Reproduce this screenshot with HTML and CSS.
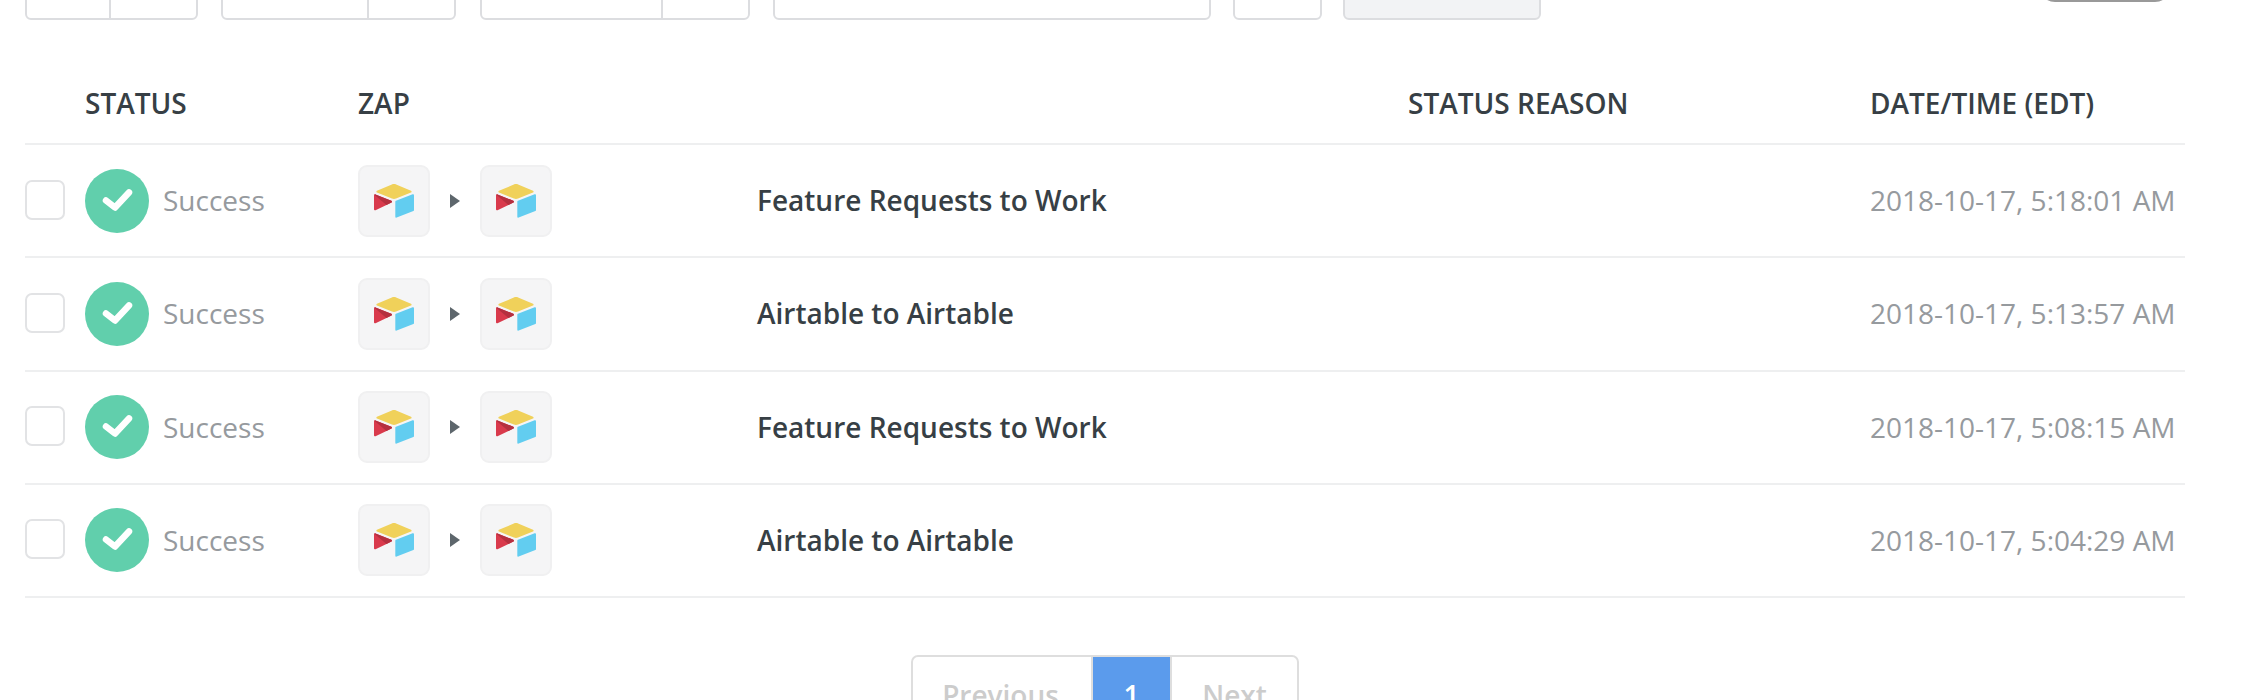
FILE: index.html
```html
<!DOCTYPE html>
<html lang="en">
<head>
<meta charset="utf-8">
<title>Zap history</title>
<link rel="stylesheet" href="styles.css">
</head>
<body>
<svg class="defs" width="0" height="0" aria-hidden="true">
  <symbol id="airtable" viewBox="11 10 177 150" preserveAspectRatio="none">
    <path fill="#f0d15a" d="M90.04 12.37 24.08 39.66c-3.67 1.52-3.63 6.73.06 8.19l66.24 26.27c5.82 2.31 12.3 2.31 18.12 0l66.24-26.27c3.69-1.46 3.73-6.67.06-8.19l-65.96-27.29c-6.02-2.49-12.78-2.49-18.8 0"/>
    <path fill="#62cdf0" d="M105.31 88.46v65.62c0 3.12 3.15 5.26 6.05 4.11l73.81-28.65c1.68-.67 2.79-2.3 2.79-4.11V59.81c0-3.12-3.15-5.26-6.05-4.11l-73.81 28.65c-1.68.67-2.79 2.3-2.79 4.11"/>
    <path fill="#d93a4c" d="m88.08 91.85-21.9 10.57-2.23 1.08-46.24 22.15c-2.93 1.42-6.67-.72-6.67-3.97V60.09c0-1.18.6-2.2 1.41-2.96.34-.34.72-.63 1.12-.85 1.1-.66 2.68-.84 4.02-.31l70.12 27.78c3.56 1.41 3.84 6.41.37 8.1"/>
    <path fill="#b5303f" d="m88.08 91.85-21.9 10.57-53.73-45.29c.34-.34.72-.63 1.12-.85 1.1-.66 2.68-.84 4.02-.31l70.12 27.78c3.56 1.41 3.84 6.41.37 8.1"/>
  </symbol>
  <symbol id="check" viewBox="0 0 64 64">
    <circle cx="32" cy="32" r="32" fill="#61cfac"/>
    <path d="M21 31.5 30 38.5 44 23.5" fill="none" stroke="#fff" stroke-width="6.5" stroke-linecap="round" stroke-linejoin="round"/>
  </symbol>
</svg>

<div class="toolbar">
  <div class="group group-a"><span class="seg seg-a1"></span><span class="seg seg-a2"></span></div>
  <div class="group group-b"><span class="seg seg-b1"></span><span class="seg seg-b2"></span></div>
  <div class="group group-c"><span class="seg seg-c1"></span><span class="seg seg-c2"></span></div>
  <div class="group group-d"></div>
  <div class="group group-e"></div>
  <div class="group group-f"></div>
  <div class="pill"></div>
</div>

<table class="history">
  <colgroup>
    <col class="col-check"><col class="col-status"><col class="col-apps"><col class="col-name"><col class="col-reason"><col class="col-date">
  </colgroup>
  <thead>
    <tr>
      <th></th><th>STATUS</th><th colspan="2">ZAP</th><th>STATUS REASON</th><th>DATE/TIME (EDT)</th>
    </tr>
  </thead>
  <tbody>
    <tr>
      <td><span class="box"></span></td>
      <td><div class="status"><svg class="status-icon"><use href="#check"/></svg><span class="status-text">Success</span></div></td>
      <td><div class="apps"><span class="tile"><svg class="logo"><use href="#airtable"/></svg></span><span class="arrow"></span><span class="tile"><svg class="logo"><use href="#airtable"/></svg></span></div></td>
      <td class="name">Feature Requests to Work</td><td></td><td class="date">2018-10-17, 5:18:01 AM</td>
    </tr>
    <tr>
      <td><span class="box"></span></td>
      <td><div class="status"><svg class="status-icon"><use href="#check"/></svg><span class="status-text">Success</span></div></td>
      <td><div class="apps"><span class="tile"><svg class="logo"><use href="#airtable"/></svg></span><span class="arrow"></span><span class="tile"><svg class="logo"><use href="#airtable"/></svg></span></div></td>
      <td class="name">Airtable to Airtable</td><td></td><td class="date">2018-10-17, 5:13:57 AM</td>
    </tr>
    <tr>
      <td><span class="box"></span></td>
      <td><div class="status"><svg class="status-icon"><use href="#check"/></svg><span class="status-text">Success</span></div></td>
      <td><div class="apps"><span class="tile"><svg class="logo"><use href="#airtable"/></svg></span><span class="arrow"></span><span class="tile"><svg class="logo"><use href="#airtable"/></svg></span></div></td>
      <td class="name">Feature Requests to Work</td><td></td><td class="date">2018-10-17, 5:08:15 AM</td>
    </tr>
    <tr>
      <td><span class="box"></span></td>
      <td><div class="status"><svg class="status-icon"><use href="#check"/></svg><span class="status-text">Success</span></div></td>
      <td><div class="apps"><span class="tile"><svg class="logo"><use href="#airtable"/></svg></span><span class="arrow"></span><span class="tile"><svg class="logo"><use href="#airtable"/></svg></span></div></td>
      <td class="name">Airtable to Airtable</td><td></td><td class="date">2018-10-17, 5:04:29 AM</td>
    </tr>
  </tbody>
</table>

<nav class="pager">
  <span class="page page-prev">Previous</span><span class="page page-current">1</span><span class="page page-next">Next</span>
</nav>
</body>
</html>
```
FILE: styles.css
```css
* { box-sizing: border-box; }
html, body { margin: 0; height: 700px; overflow: hidden; background: #fff; }
body { font-family: "Open Sans", "Noto Sans", sans-serif; color: #373f45; }
.defs { position: absolute; }

.toolbar { display: flex; align-items: flex-end; height: 20px; overflow: hidden; padding-left: 25px; }
.group { display: flex; height: 50px; border: 2px solid #dcdde0; border-radius: 6px; flex: none; }
.seg { display: block; height: 100%; }
.seg + .seg { border-left: 2px solid #dcdde0; }
.group-a { width: 173px; margin-right: 23px; }
.seg-a1 { width: 82px; }
.group-b { width: 235px; margin-right: 24px; }
.seg-b1 { width: 144px; }
.group-c { width: 270px; margin-right: 23px; }
.seg-c1 { width: 179px; }
.group-d { width: 438px; margin-right: 22px; }
.group-e { width: 89px; margin-right: 21px; }
.group-f { width: 198px; background: #f2f3f5; }
.pill { width: 132px; height: 50px; margin-left: 498px; margin-bottom: 18px; background: #999; border-radius: 16px; flex: none; }

.history { width: 2160px; margin-left: 25px; border-collapse: collapse; table-layout: fixed; }
.col-check { width: 60px; }
.col-status { width: 273px; }
.col-apps { width: 399px; }
.col-name { width: 651px; }
.col-reason { width: 462px; }
.col-date { width: 315px; }
th { height: 124px; padding: 42px 0 0; text-align: left; font-size: 28px; font-weight: 600; border-bottom: 2px solid #eeeff0; }
td { height: 113.25px; padding: 0; font-size: 28px; border-bottom: 2px solid #eeeff0; }
.box { display: block; width: 40px; height: 40px; margin-bottom: 2px; border: 2px solid #e2e3e5; border-radius: 7px; }
.status { display: flex; align-items: center; gap: 14px; color: #969a9e; }
.status-icon { width: 64px; height: 64px; flex: none; }
.status-text { margin-bottom: 1px; }
.apps { display: flex; align-items: center; }
.tile { display: flex; align-items: center; justify-content: center; width: 72px; height: 72px; background: #f5f5f6; border: 2px solid #f0f0f1; border-radius: 9px; }
.logo { width: 40px; height: 34px; }
.arrow { width: 0; height: 0; margin: 0 20px; border-left: 10px solid #5d666c; border-top: 7px solid transparent; border-bottom: 7px solid transparent; }
.name { font-weight: 600; padding-bottom: 1px; }
.date { color: #969a9e; padding-bottom: 1px; }

.pager { display: flex; width: 388px; height: 90px; margin: 57px 0 0 911px; border: 2px solid #dedede; border-radius: 7px; overflow: hidden; font-size: 28px; font-weight: 600; }
.page { display: block; padding-top: 19px; text-align: center; color: #ccc; }
.page-prev { width: 178px; padding-right: 3px; }
.page-current { width: 81px; background: #5b9bec; color: #fff; border-left: 2px solid #dedede; border-right: 2px solid #dedede; }
.page-next { flex: 1; }
```
